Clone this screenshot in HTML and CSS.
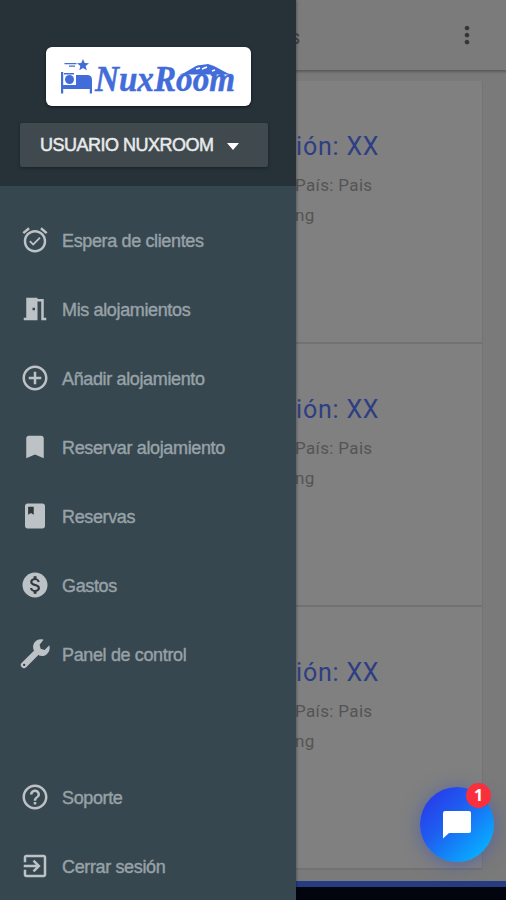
FILE: index.html
```html
<!DOCTYPE html>
<html lang="es">
<head>
<meta charset="utf-8">
<title>NuxRoom</title>
<link rel="stylesheet" href="styles.css">
</head>
<body>
<div class="screen">
  <main class="page">
    <header class="appbar">
      <span class="appbar-title">s</span>
      <svg class="more" width="28" height="28" viewBox="0 0 24 24"><path d="M12 8c1.1 0 2-.9 2-2s-.9-2-2-2-2 .9-2 2 .9 2 2 2zm0 2c-1.1 0-2 .9-2 2s.9 2 2 2 2-.9 2-2-.9-2-2-2zm0 6c-1.1 0-2 .9-2 2s.9 2 2 2 2-.9 2-2-.9-2-2-2z"/></svg>
    </header>
    <div class="cards">
      <article class="card"><h2>ión: XX</h2><p>País: Pais</p><p>ng</p></article>
      <article class="card"><h2>ión: XX</h2><p>País: Pais</p><p>ng</p></article>
      <article class="card"><h2>ión: XX</h2><p>País: Pais</p><p>ng</p></article>
    </div>
    <footer class="footer"></footer>
  </main>

  <nav class="drawer">
    <div class="drawer-head">
      <div class="logo">
        <svg width="205" height="59" viewBox="0 0 205 59">
          <g fill="#426cda">
            <path d="M15 25h2.200v13H46v8.500h-2.200V42H17.200v4.500H15z"/>
            <circle cx="23.500" cy="32.500" r="4.500"/>
            <path d="M30 28H41q5 0 5 5v6H30zM18 26h10v1.500h-10z"/>
            <path d="M37 12l1.700 4 4.300.300-3.300 2.800 1.100 4.200-3.800-2.200-3.700 2.200 1-4.200-3.300-2.800 4.300-.300z"/>
            <path d="M18.500 16h12v1.200h-12zM23 18.500h6v1.200h-6z"/>
            <path d="M133 27.500l5-1.500 12-7q2-1 5-1l7-1 6 2 13 7 4 1.500z"/>
          </g>
          <path d="M150 22l4-1m2 1l5-2m5 4l3-1" stroke="#fff" stroke-width="1.500"/>
          <text class="wordmark" x="49" y="44" textLength="140" lengthAdjust="spacingAndGlyphs">NuxRoom</text>
        </svg>
      </div>
      <div class="user"><span>USUARIO NUXROOM</span><i class="caret"></i></div>
    </div>
    <ul class="menu">
      <li><svg viewBox="0 0 24 24"><path d="M22 5.720l-4.600-3.860-1.290 1.530 4.600 3.860L22 5.720zM7.880 3.390L6.600 1.860 2 5.710l1.290 1.530 4.590-3.850zM12 4c-4.970 0-9 4.030-9 9s4.020 9 9 9c4.970 0 9-4.030 9-9s-4.030-9-9-9zm0 16c-3.870 0-7-3.130-7-7s3.130-7 7-7 7 3.130 7 7-3.130 7-7 7zm-1.460-5.470L8.410 12.400l-1.060 1.060 3.180 3.180 6-6-1.060-1.060-4.930 4.950z"/></svg><span>Espera de clientes</span></li>
      <li><svg viewBox="0 0 24 24"><path fill-rule="evenodd" d="M14 6v15H3v-2h2V3h9v1h5v15h2v2h-4V6h-3zm-4 5v2h2v-2h-2z"/></svg><span>Mis alojamientos</span></li>
      <li><svg viewBox="0 0 24 24"><path d="M13 7h-2v4H7v2h4v4h2v-4h4v-2h-4V7zm-1-5C6.480 2 2 6.480 2 12s4.480 10 10 10 10-4.480 10-10S17.520 2 12 2zm0 18c-4.410 0-8-3.590-8-8s3.590-8 8-8 8 3.590 8 8-3.590 8-8 8z"/></svg><span>Añadir alojamiento</span></li>
      <li><svg viewBox="0 0 24 24"><path d="M17 3H7c-1.100 0-2 .9-2 2v16l7-3 7 3V5c0-1.100-.9-2-2-2z"/></svg><span>Reservar alojamiento</span></li>
      <li><svg viewBox="0 0 24 24"><path d="M18 2H6c-1.100 0-2 .9-2 2v16c0 1.100.9 2 2 2h12c1.100 0 2-.9 2-2V4c0-1.100-.9-2-2-2z"/><path class="cut" d="M6.500 4.500h4.500v6.500l-2.250-1.400-2.250 1.400z"/></svg><span>Reservas</span></li>
      <li><svg viewBox="0 0 24 24"><circle cx="12" cy="12" r="10"/><path class="cut" d="M12.310 11.140c-1.770-.45-2.340-.94-2.340-1.670 0-.84.790-1.430 2.100-1.430 1.380 0 1.900.66 1.940 1.640h1.710c-.05-1.340-.87-2.570-2.490-2.970V5H10.900v1.690c-1.510.32-2.720 1.300-2.720 2.810 0 1.790 1.490 2.690 3.660 3.210 1.950.46 2.340 1.150 2.340 1.870 0 .53-.39 1.390-2.100 1.390-1.600 0-2.230-.72-2.320-1.640H8.040c.1 1.700 1.360 2.660 2.860 2.970V19h2.340v-1.670c1.520-.29 2.720-1.160 2.730-2.770-.01-2.200-1.900-2.960-3.660-3.420z"/></svg><span>Gastos</span></li>
      <li><svg viewBox="0 0 24 24"><path d="M13.500 10.500L3.200 20.800" fill="none" stroke="#bdc2c6" stroke-width="5" stroke-linecap="round"/><path d="M18.800 0.600c-2.900-1-6 .1-7.500 2.600-1 1.700-1.100 3.900-.3 5.700l4.300 4.300c2 .7 4.200.4 5.900-.9 2.200-1.700 3.100-4.600 2.200-7.300l-3.700 3.700-3.200-.9-.8-3.200z"/><circle class="cut" cx="3.300" cy="20.700" r=".9"/></svg><span>Panel de control</span></li>
    </ul>
    <ul class="menu menu-bottom">
      <li><svg viewBox="0 0 24 24"><path d="M11 18h2v-2h-2v2zm1-16C6.480 2 2 6.480 2 12s4.480 10 10 10 10-4.480 10-10S17.520 2 12 2zm0 18c-4.410 0-8-3.590-8-8s3.590-8 8-8 8 3.590 8 8-3.590 8-8 8zm0-14c-2.210 0-4 1.790-4 4h2c0-1.100.9-2 2-2s2 .9 2 2c0 2-3 1.750-3 5h2c0-2.250 3-2.500 3-5 0-2.210-1.790-4-4-4z"/></svg><span>Soporte</span></li>
      <li><svg viewBox="0 0 24 24"><path d="M10.090 15.590L11.500 17l5-5-5-5-1.410 1.410L12.670 11H3v2h9.670l-2.580 2.590zM19 3H5c-1.110 0-2 .9-2 2v4h2V5h14v14H5v-4H3v4c0 1.100.89 2 2 2h14c1.100 0 2-.9 2-2V5c0-1.100-.9-2-2-2z"/></svg><span>Cerrar sesión</span></li>
    </ul>
  </nav>

  <div class="chat">
    <svg width="28" height="28" viewBox="0 0 28 28"><path fill="#fff" d="M2 0h24q2 0 2 2v18q0 2-2 2H6l-6 5.500V2q0-2 2-2z"/></svg>
    <span class="badge">1</span>
  </div>
</div>
</body>
</html>
```
FILE: styles.css
```css
* { box-sizing: border-box; margin: 0; padding: 0; }
body { font-family: "Liberation Sans", Arial, sans-serif; }
.screen { position: relative; width: 506px; height: 900px; overflow: hidden; background: #7a7a7a; }

.page { height: 900px; padding-left: 296px; display: flex; flex-direction: column; }
.appbar {
  height: 70px; display: flex; align-items: center; justify-content: space-between;
  padding-right: 25px; background: #7b7b7b; box-shadow: 0 1px 2px 1px #5b5b5b;
}
.appbar-title { font: 20px/24px Roboto, sans-serif; color: #414141; margin: 4px 0 0 -6px; }
.more { fill: #35353a; }
.cards { margin: 11px 23px 0 0; height: 789px; border-right: 1px solid #747474; background: #808080; }
.card { height: 263px; padding-top: 50px; border-bottom: 2px solid #727272; }
.card h2 { font: 400 25px/32px Roboto, sans-serif; color: #2d3e83; white-space: nowrap; letter-spacing: .8px; }
.card p { font: 17px/30px Roboto, sans-serif; color: #545454; white-space: nowrap; margin-left: -1px; letter-spacing: .35px; }
.card h2 + p { margin-top: 7px; }
.footer { margin-top: 11px; height: 19px; border-top: 6px solid #253c80; background: #03050e; }

.drawer {
  position: absolute; left: 0; top: 0; width: 296px; height: 900px;
  display: flex; flex-direction: column; background: #37474f;
  box-shadow: 0 0 3px rgba(0, 0, 0, .5);
}
.drawer-head { height: 187px; padding: 47px 0 0 20px; background: #263238; }
.logo {
  width: 205px; height: 59px; margin-left: 26px; border-radius: 6px; background: #fff;
  box-shadow: 0 1px 3px #10191d;
}
.logo svg { display: block; }
.wordmark { font: italic bold 36px "Liberation Serif", serif; fill: #426cda; stroke: #426cda; stroke-width: .5px; }
.user {
  width: 248px; height: 44px; margin-top: 17px; padding-left: 20px; border-radius: 2px;
  display: flex; align-items: center; gap: 13px; background: #40494e;
  box-shadow: 0 1px 3px #182126; color: #e8eaeb; font-size: 18px;
  -webkit-text-stroke: .5px #e8eaeb;
}
.user span { letter-spacing: -.5px; white-space: nowrap; }
.caret { margin-top: 3px; border: 6.500px solid transparent; border-top: 7px solid #fff; border-bottom: 0; }
.menu { list-style: none; padding-top: 19px; }
.menu li { height: 69px; display: flex; align-items: center; gap: 12px; padding-left: 20px; }
.menu svg { width: 30px; height: 30px; fill: #bdc2c6; flex: none; overflow: visible; }
.menu .cut { fill: #30383d; }
.menu span { margin-top: 3px; font-size: 18px; color: #97a2a8; letter-spacing: -.36px; white-space: nowrap; -webkit-text-stroke: .4px #97a2a8; }
.menu-bottom { margin-top: 74px; padding-top: 0; }

.chat {
  position: absolute; left: 420px; top: 787px; width: 74px; height: 75px; border-radius: 50%;
  display: grid; place-items: center; background: linear-gradient(135deg, #2836e8 5%, #1f5df0 40%, #08aaff 85%);
  box-shadow: 0 2px 18px rgba(60, 85, 175, .65);
}
.badge {
  position: absolute; left: 46px; top: -4px; width: 25px; height: 25px; border-radius: 50%;
  background: #f9303c; color: #fff; text-align: center; font: bold 16px/24px "Noto Sans", sans-serif;
}
```
